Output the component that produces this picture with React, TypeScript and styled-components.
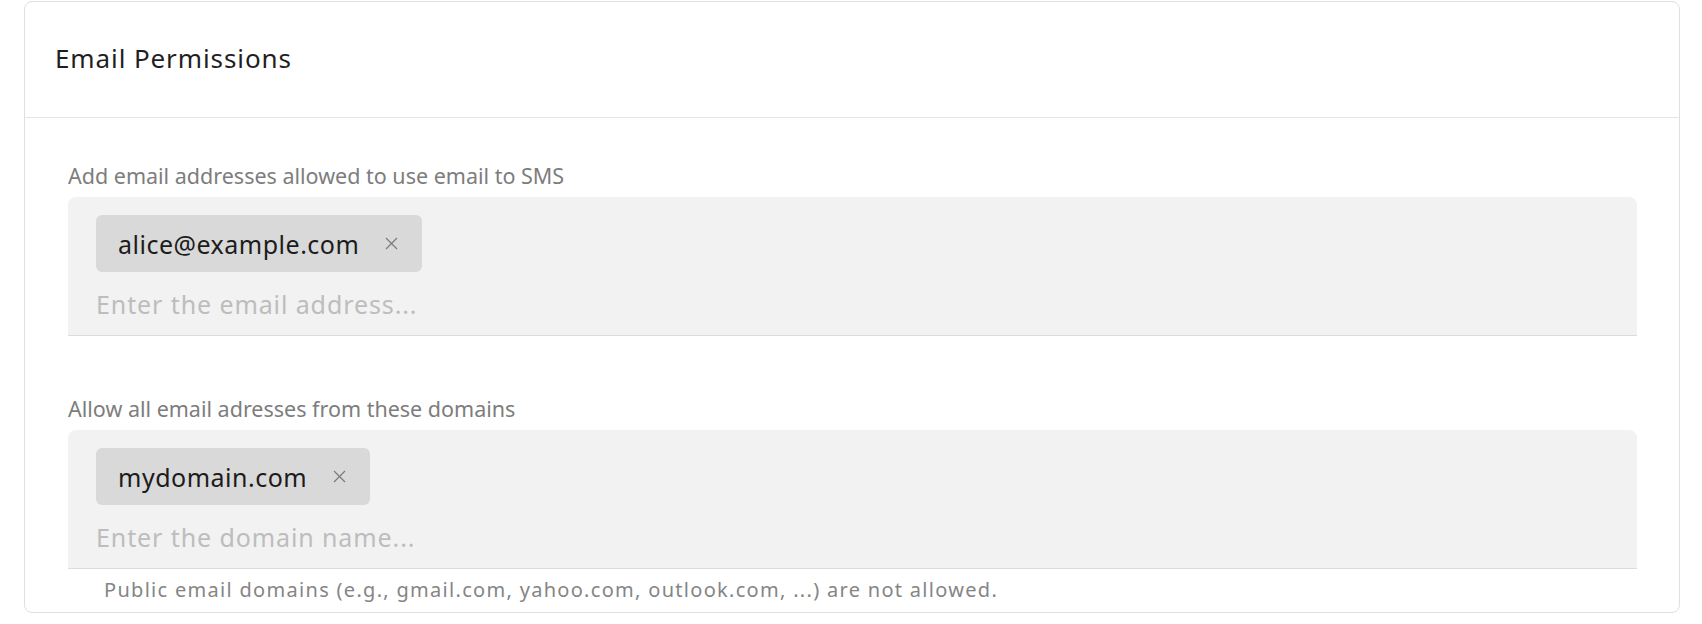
import React from 'react';
import styled, { createGlobalStyle } from 'styled-components';

const GlobalStyle = createGlobalStyle`
  html, body {
    margin: 0;
    padding: 0;
    background: #ffffff;
    font-family: "Noto Sans", "Open Sans", sans-serif;
  }
`;

const Card = styled.section`
  margin: 1px 22px 0 24px;
  background: #fff;
  border: 1px solid #e0e0e0;
  border-radius: 8px;
`;

const Header = styled.header`
  height: 116px;
  box-sizing: border-box;
  display: flex;
  align-items: center;
  padding: 0 0 4px 30px;
  border-bottom: 1px solid #e4e4e4;
`;

const Title = styled.h2`
  margin: 0;
  font-size: 26px;
  font-weight: 400;
  letter-spacing: 0.9px;
  color: #1f1f1f;
`;

const Body = styled.div`
  padding: 46px 42px 11px 43px;
`;

const Field = styled.div<{ $gap?: number }>`
  margin-top: ${(p) => p.$gap ?? 0}px;
`;

const Label = styled.label`
  display: block;
  font-size: 21.5px;
  line-height: 24px;
  color: #7d7d7d;
  margin-bottom: 9px;
`;

const TagBox = styled.div`
  background: #f2f2f2;
  border-radius: 8px 8px 0 0;
  border-bottom: 1px solid #dcdcdc;
  padding: 18px 28px 15px;
`;

const Chip = styled.span`
  display: inline-flex;
  align-items: center;
  height: 57px;
  padding: 0 24px 0 22px;
  gap: 26px;
  background: #d9d9d9;
  border-radius: 6px;
  font-size: 25px;
  letter-spacing: 0.5px;
  color: #1c1c1c;
`;

const Remove = styled.button`
  border: 0;
  background: none;
  padding: 0;
  display: flex;
  color: #7a7a7a;
  cursor: pointer;
`;

const Input = styled.input`
  display: block;
  width: 100%;
  margin-top: 16px;
  border: 0;
  background: transparent;
  outline: none;
  padding: 0;
  font-family: inherit;
  font-size: 25px;
  letter-spacing: 0.9px;
  line-height: 32px;
  height: 32px;
  color: #333;
  &::placeholder {
    color: #bdbdbd;
  }
`;

const Hint = styled.p`
  margin: 10px 0 0 36px;
  font-size: 20px;
  line-height: 22px;
  letter-spacing: 1.3px;
  color: #858585;
`;

const CloseIcon = () => (
  <svg width="13" height="13" viewBox="0 0 13 13" fill="none" stroke="currentColor" strokeWidth="1.2">
    <path d="M1 1l11 11M12 1L1 12" />
  </svg>
);

const Tag: React.FC<{ value: string }> = ({ value }) => (
  <Chip>
    {value}
    <Remove aria-label={`Remove ${value}`}>
      <CloseIcon />
    </Remove>
  </Chip>
);

const App: React.FC = () => (
  <>
    <GlobalStyle />
    <Card>
      <Header>
        <Title>Email Permissions</Title>
      </Header>
      <Body>
        <Field>
          <Label>Add email addresses allowed to use email to SMS</Label>
          <TagBox>
            <Tag value="alice@example.com" />
            <Input placeholder="Enter the email address..." />
          </TagBox>
        </Field>
        <Field $gap={61}>
          <Label>Allow all email adresses from these domains</Label>
          <TagBox>
            <Tag value="mydomain.com" />
            <Input placeholder="Enter the domain name..." />
          </TagBox>
          <Hint>Public email domains (e.g., gmail.com, yahoo.com, outlook.com, ...) are not allowed.</Hint>
        </Field>
      </Body>
    </Card>
  </>
);

export default App;
